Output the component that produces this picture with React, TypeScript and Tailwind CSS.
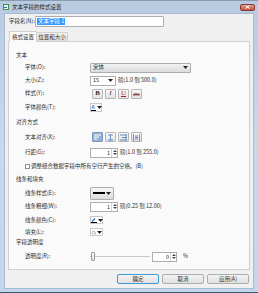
import React from "react";

const font = "font-['Noto_Sans_CJK_SC',sans-serif]";

const Caret = () => (
  <svg width="5" height="3" viewBox="0 0 5 3" className="shrink-0">
    <path d="M0 0h5L2.5 3z" fill="#222" />
  </svg>
);

const Spin = ({ value, w = "w-[28px]" }: { value: string; w?: string }) => (
  <div className={`flex h-[10px] ${w} border border-[#abadb3] bg-white`}>
    <span className="flex-1 pr-[1px] text-right leading-[8px]">{value}</span>
    <div className="flex w-[6px] flex-col items-center justify-center gap-[1px] border-l border-[#d5d5d5]">
      <svg width="4" height="2" viewBox="0 0 4 2">
        <path d="M0 2h4L2 0z" fill="#444" />
      </svg>
      <svg width="4" height="2" viewBox="0 0 4 2">
        <path d="M0 0h4L2 2z" fill="#444" />
      </svg>
    </div>
  </div>
);

const ToolBtn = ({
  children,
  active = false,
}: {
  children: React.ReactNode;
  active?: boolean;
}) => (
  <div
    className={`flex h-[10px] w-[11px] items-center justify-center rounded-[1px] border ${
      active
        ? "border-[#7a98c4] bg-[#94b0d6]"
        : "border-[#b5b5b5] bg-gradient-to-b from-[#fbfbfb] to-[#e2e2e2]"
    }`}>
    {children}
  </div>
);

const Row = ({
  h,
  label,
  children,
}: {
  h: string;
  label: string;
  children?: React.ReactNode;
}) => (
  <div className={`flex ${h} shrink-0 items-center pl-[16px]`}>
    <span className="w-[65px] shrink-0">{label}</span>
    {children}
  </div>
);

const Header = ({ h, children }: { h: string; children: React.ReactNode }) => (
  <div className={`flex ${h} shrink-0 items-center pl-[7px]`}>{children}</div>
);

const AlignIcon = ({ kind }: { kind: number }) => {
  const c = kind === 0 ? "#ffffff" : "#6b8fc0";
  return (
    <svg width="7" height="7" viewBox="0 0 7 7">
      {kind === 0 && <path d="M0 1h7M0 3h5M0 5h3" stroke={c} strokeWidth="1" />}
      {kind === 1 && <path d="M3.5 0v7M1 1h5M1 6h5" stroke={c} strokeWidth="1" />}
      {kind === 2 && <path d="M0 1h7M2 3.5h5M0 6h7M6 0v7" stroke={c} strokeWidth="1" />}
      {kind === 3 && <path d="M0.5 0v7M6.5 0v7M2 2h3M2 3.5h3M2 5h3" stroke={c} strokeWidth="1" />}
    </svg>
  );
};

export default function App() {
  return (
    <div
      className={`${font} flex h-[293px] w-[258px] flex-col whitespace-nowrap border-t border-b border-t-[#8a9bb0] border-b-[#3d566f] bg-gradient-to-b from-[#b9cbe1] via-[#c9d9ec] to-[#c3d6ec] px-[4px] pb-[3px] text-[5.5px] leading-[1.2] text-[#2a2a2a]`}>
      {/* title bar */}
      <div className="flex h-[12px] shrink-0 items-center">
        <svg width="6" height="6" viewBox="0 0 6 6" className="ml-[-1px]">
          <rect x="0" y="0" width="6" height="6" fill="#3f8f4f" />
          <rect x="1" y="1" width="4" height="4" fill="#e8f3ea" />
          <rect x="1" y="3" width="3" height="1" fill="#2f6fb0" />
        </svg>
        <span className="ml-[3px] text-[#222]">文本字段的样式设置</span>
        <div className="ml-auto mr-[-1px] flex h-[7px] w-[15px] items-center justify-center rounded-[2px] border border-[#8a3a32] bg-gradient-to-b from-[#e09a8d] to-[#c8503f]">
          <svg width="5" height="4" viewBox="0 0 5 4">
            <path d="M0.5 0.5l4 3M4.5 0.5l-4 3" stroke="#fff" strokeWidth="1" />
          </svg>
        </div>
      </div>

      {/* client */}
      <div className="flex flex-1 flex-col border border-[#a7bbd2] bg-[#f0f0f0] pl-[3px] pr-[2px]">
        <div className="mt-[2px] flex h-[11px] shrink-0 items-center">
          <span className="ml-[1px] w-[26px]">字段名(N):</span>
          <div className="flex h-[11px] w-[129px] items-center rounded-[1px] border border-[#abadb3] bg-white pl-[1px]">
            <span className="bg-[#3399ff] px-[1px] text-white">文本字段 1</span>
          </div>
        </div>

        {/* tabs */}
        <div className="mt-[4px] flex h-[10px] shrink-0 items-end pl-[1px]">
          <div className="relative z-10 -mb-px flex h-[11px] w-[28px] items-center justify-center border border-b-0 border-[#d0d0d0] bg-[#fafafa]">
            格式设置
          </div>
          <div className="flex h-[9px] w-[31px] items-center justify-center border border-b-0 border-l-0 border-[#d0d0d0] bg-gradient-to-b from-[#f2f2f2] to-[#e0e0e0]">
            位置和大小
          </div>
        </div>

        {/* panel */}
        <div className="flex h-[229px] w-[242px] shrink-0 flex-col border border-[#d0d0d0] bg-[#fafafa] pt-[8px]">
          <Header h="h-[11px]">文本</Header>
          <Row h="h-[13px]" label="字体(O):">
            <div className="flex h-[10px] w-[101px] items-center justify-between rounded-[1px] border border-[#acacac] bg-gradient-to-b from-[#f2f2f2] to-[#dcdcdc] px-[2px]">
              <span>宋体</span>
              <Caret />
            </div>
          </Row>
          <Row h="h-[13px]" label="大小(Z):">
            <div className="flex h-[10px] w-[26px] items-center justify-between border border-[#abadb3] bg-white px-[2px]">
              <span>15</span>
              <Caret />
            </div>
            <span className="ml-[2px]">磅(1.0 到 500.0)</span>
          </Row>
          <Row h="h-[13px]" label="样式(Y):">
            <div className="ml-[2px] flex gap-[2px]">
              <ToolBtn>
                <span className="font-['Liberation_Serif',serif] text-[7px] font-bold leading-none">B</span>
              </ToolBtn>
              <ToolBtn>
                <span className="font-['Liberation_Serif',serif] text-[7px] italic leading-none">I</span>
              </ToolBtn>
              <ToolBtn>
                <span className="font-['Liberation_Serif',serif] text-[7px] leading-none text-[#b02020] underline">U</span>
              </ToolBtn>
              <ToolBtn>
                <span className="text-[4px] leading-none text-[#555] line-through decoration-[#c03030]">abc</span>
              </ToolBtn>
            </div>
          </Row>
          <Row h="h-[15px]" label="字体颜色(T):">
            <div className="flex h-[9px] w-[12px] items-center justify-center gap-[1px] border border-[#c8c8c8] bg-white">
              <div className="flex flex-col items-center">
                <span className="font-['Liberation_Sans',sans-serif] text-[5px] font-bold leading-[5px] text-[#3a6fc2]">A</span>
                <div className="h-[1px] w-[5px] bg-black" />
              </div>
              <Caret />
            </div>
          </Row>

          <Header h="h-[14px]">对齐方式</Header>
          <Row h="h-[16px]" label="文本对齐(X):">
            <div className="ml-[2px] flex gap-[2px]">
              <ToolBtn active>
                <AlignIcon kind={0} />
              </ToolBtn>
              <ToolBtn>
                <AlignIcon kind={1} />
              </ToolBtn>
              <ToolBtn>
                <AlignIcon kind={2} />
              </ToolBtn>
              <ToolBtn>
                <AlignIcon kind={3} />
              </ToolBtn>
            </div>
          </Row>
          <Row h="h-[15px]" label="行距(G):">
            <Spin value="1" />
            <span className="ml-[2px]">磅(1.0 到 255.0)</span>
          </Row>
          <div className="flex h-[13px] shrink-0 items-center pl-[16px]">
            <div className="h-[5px] w-[5px] border border-[#8f8f8f] bg-white" />
            <span className="ml-[1px]">调整组合数据字段中所有空行产生的空格。(B)</span>
          </div>

          <Header h="h-[13px]">线条和填充</Header>
          <Row h="h-[14px]" label="线条样式(E):">
            <div className="flex h-[13px] w-[24px] items-center justify-between rounded-[1px] border border-[#acacac] bg-gradient-to-b from-[#f6f6f6] to-[#dedede] px-[2px]">
              <div className="h-[2px] w-[12px] bg-black" />
              <Caret />
            </div>
          </Row>
          <Row h="h-[13px]" label="线条粗细(W):">
            <Spin value="1" />
            <span className="ml-[2px]">磅(0.25 到 12.00)</span>
          </Row>
          <Row h="h-[14px]" label="线条颜色(C):">
            <div className="flex h-[8px] w-[13px] items-center justify-center gap-[1px] border border-[#c8c8c8] bg-white">
              <div className="flex flex-col items-center">
                <svg width="5" height="4" viewBox="0 0 5 4">
                  <path d="M1 3.5L4 0.5" stroke="#3a6fc2" strokeWidth="1.2" />
                </svg>
                <div className="h-[1px] w-[6px] bg-black" />
              </div>
              <Caret />
            </div>
          </Row>
          <Row h="h-[10px]" label="填充(L):">
            <div className="flex h-[8px] w-[13px] items-center justify-center gap-[1px] border border-[#c8c8c8] bg-white">
              <svg width="6" height="5" viewBox="0 0 6 5">
                <path d="M1 2.5L3 0.5L5 2.5L3 4.5z" fill="none" stroke="#777" strokeWidth="0.8" />
                <circle cx="5.3" cy="4" r="0.7" fill="#e0a040" />
              </svg>
              <Caret />
            </div>
          </Row>

          <Header h="h-[11px]">字段透明度</Header>
          <Row h="h-[17px]" label="透明度(R):">
            <div className="relative flex h-[10px] w-[60px] items-center">
              <div className="h-[1px] flex-1 bg-[#c9c9c9]" />
              <div className="absolute left-[1px] top-0 h-[9px] w-[4px] rounded-[1px] border border-[#9a9a9a] bg-gradient-to-b from-[#fdfdfd] to-[#e4e4e4]" />
            </div>
            <div className="ml-[2px]">
              <Spin value="0" w="w-[25px]" />
            </div>
            <span className="ml-[6px]">%</span>
          </Row>
        </div>

        {/* buttons */}
        <div className="mt-[4px] flex shrink-0 justify-end gap-[3px] pr-[2px]">
          <div className="flex h-[10px] w-[42px] items-center justify-center rounded-[2px] border border-[#3c9bd6] bg-gradient-to-b from-[#f4f4f4] to-[#e0e0e0]">
            确定
          </div>
          <div className="flex h-[10px] w-[42px] items-center justify-center rounded-[2px] border border-[#acacac] bg-gradient-to-b from-[#f4f4f4] to-[#e0e0e0]">
            取消
          </div>
          <div className="flex h-[10px] w-[42px] items-center justify-center rounded-[2px] border border-[#acacac] bg-gradient-to-b from-[#f4f4f4] to-[#e0e0e0]">
            应用(A)
          </div>
        </div>
      </div>
    </div>
  );
}
